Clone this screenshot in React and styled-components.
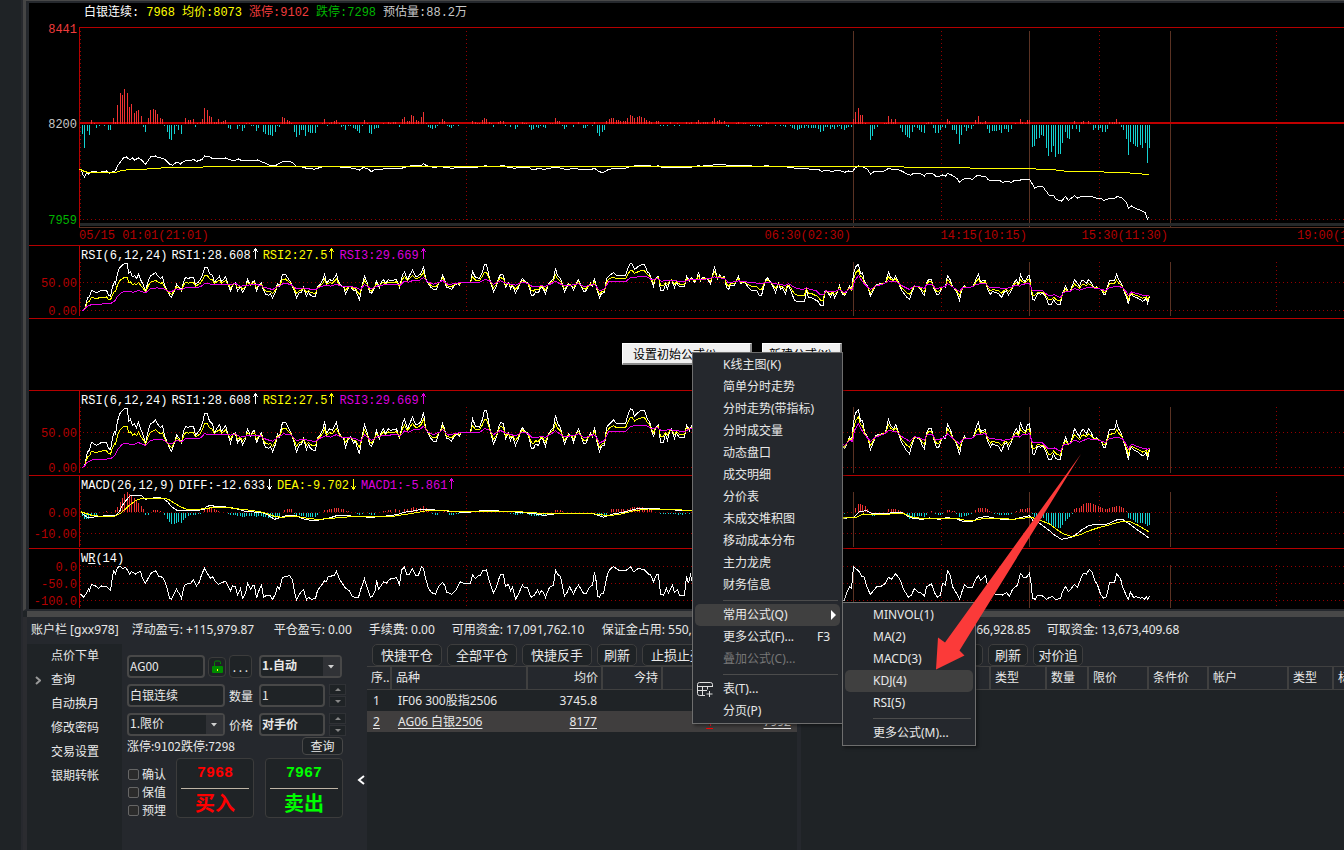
import React, { useState } from 'react';
import styled, { createGlobalStyle } from 'styled-components';

const UI_FONT = '"Noto Sans", "Noto Sans CJK SC", sans-serif';
const MONO_FONT = '"Liberation Mono", "Noto Sans CJK SC", monospace';
const FORM_FONT = '"Noto Sans CJK SC", sans-serif';

const GlobalStyle = createGlobalStyle`
    * {
        box-sizing: border-box;
    }
    body {
        margin: 0;
        background: #1f2326;
        color: #e8e8e8;
        font-family: ${UI_FONT};
        font-size: 12px;
        line-height: 16px;
    }
    button, input, select {
        margin: 0;
        color: inherit;
        font: inherit;
    }
`

const Page = styled.div`
    position: relative;
    display: flex;
    min-height: 100vh;
    overflow: hidden;
`
const Rail = styled.aside`
    flex: 0 0 23px;
    border-right: 2px solid #27292e;
`
const Main = styled.main`
    flex: 1;
    min-width: 0;
    display: flex;
    flex-direction: column;
`

/* ---------- charts ---------- */

const Charts = styled.section`
    border-left: 3px solid #454545;
    border-top: 1px solid #484848;
    border-bottom: 2px solid #25282d;
    padding: 2px 0 0 3px;
    background: #25282d;
`
const Splitter = styled.div`
    height: 6px;
    margin-left: 4px;
    background: #484848;
`
const Panel = styled.div`
    position: relative;
    background: #000;
    border-bottom: ${({ $last }) => $last ? 'none' : '1px solid #b40000'};
`
const Plot = styled.svg`
    display: block;
    width: 100%;
    font-family: ${MONO_FONT};
    font-size: 12px;
    shape-rendering: crispEdges;
`
const Legend = styled.div`
    position: absolute;
    top: 2px;
    left: ${({ $left }) => $left || 52}px;
    display: flex;
    gap: ${({ $gap }) => $gap || 4}px;
    font-family: ${MONO_FONT};
    white-space: nowrap;
`
const LegendItem = styled.span`
    display: flex;
    align-items: center;
    gap: 1px;
    color: ${({ $color }) => $color};
`
const EmptyPanel = styled(Panel)`
    display: flex;
    gap: 10px;
    height: 72px;
    padding: 24px 0 0 593px;
`
const FormulaButton = styled.button`
    height: 22px;
    width: ${({ $width }) => $width}px;
    padding: 0 0 0 ${({ $pad }) => $pad}px;
    border: 1px solid #fff;
    border-right: 2px solid #8a8a8a;
    border-bottom: 2px solid #8a8a8a;
    background: #f0f0f0;
    color: #000;
    font-family: ${FORM_FONT};
    text-align: left;
    white-space: nowrap;
`

// samples are kept in thirds of a pixel, in blocks of 448px
const BLOCK = 448;
const parse = (blocks, dy = 0) => blocks.flatMap((block, i) =>
    block.split(' ').map(pair => {
        const [x, y] = pair.split(',').map(Number);
        return [Math.floor(x / 3) + BLOCK * i + 0.5, y / 3 + dy];
    })
);
const parseBars = blocks => blocks.flatMap((block, i) =>
    block.split(' ').map(pair => {
        const [x, h] = pair.split(',').map(Number);
        return [Math.floor(x / 3) + BLOCK * i, Math.round(h / 3)];
    })
);
const valueAt = (points, x) => {
    const i = points.findIndex(p => p[0] >= x);
    if (i < 0) return points[points.length - 1][1];
    if (i === 0) return points[0][1];
    const [x0, y0] = points[i - 1];
    const [x1, y1] = points[i];
    return x1 === x0 ? y1 : y0 + (y1 - y0) * (x - x0) / (x1 - x0);
};

const priceLine = parse([
    '238,507 244,510 248,522 254,531 260,518 266,522 275,514 290,516 305,516 318,513 328,519 340,515 347,512 353,498 360,485 370,474 380,471 388,479 396,474 404,480 416,474 424,480 436,493 445,480 452,471 466,468 475,473 490,475 500,483 508,492 516,496 524,490 532,487 540,492 548,487 556,482 570,482 580,478 590,484 600,480 608,477 614,468 625,469 635,474 650,477 665,476 675,474 690,480 705,481 715,477 727,483 740,482 760,481 772,480 785,485 800,491 812,497 826,497 840,488 850,484 870,485 880,490 890,500 905,500 917,504 930,504 940,508 955,504 970,500 985,500 1000,499 1015,499 1030,504 1045,503 1060,505 1078,510 1090,502 1105,508 1115,515 1125,508 1140,510 1150,506 1170,506 1200,506 1215,501 1235,497 1260,498 1270,491 1280,497 1300,502 1325,500 1340,503',
    '0,503 10,505 30,502 80,502 100,500 112,497 125,500 150,499 165,496 175,501 200,505 210,502 240,502 252,509 270,506 290,508 310,504 325,502 340,505 352,508 380,506 410,509 430,508 440,505 450,514 460,517 470,516 480,508 500,506 530,506 545,500 565,497 605,497 615,500 630,497 640,501 700,501 730,501 750,497 760,499 770,497 788,498 798,493 830,494 845,498 860,496 900,497 930,500 955,497 970,499 1010,500 1030,503 1050,506 1080,507 1110,508 1120,514 1135,511 1150,514 1175,511 1188,517 1200,513 1212,514 1222,503 1232,498 1245,501 1258,508 1268,522 1280,514 1305,514 1322,505 1335,509 1342,507',
    '0,507 15,513 30,521 42,526 52,520 70,520 85,528 92,520 108,520 118,528 130,529 140,525 148,529 155,520 165,525 175,530 183,537 190,547 200,538 215,535 228,538 240,528 250,526 258,531 268,529 278,540 310,541 318,547 330,544 345,547 355,541 370,541 380,538 400,538 405,548 415,564 425,560 440,559 452,575 460,587 472,587 482,599 495,603 508,590 518,601 535,587 545,594 555,589 585,589 600,595 615,595 622,602 640,595 655,595 663,589 678,595 690,608 697,625 705,618 718,625 735,632 748,638 750,650 755,658 758,652',
]);
const averageLine = parse([
    '238,507 250,513 262,517 345,517 365,512 390,508 440,508 445,505 480,505 485,502 608,502 612,499 1340,499',
    '0,499 1340,499',
    '0,499 22,499 24,502 220,502 223,505 418,505 420,508 475,508 480,511 502,511 505,514 622,514 626,517 700,517 703,520 735,520 738,523 758,523',
]);
const priceBars = parseBars([
    '248,-27 254,-68 263,-18 269,-30 275,12 283,3 290,-9 297,-3 312,-2 326,-15 332,-15 341,18 347,6 353,57 361,93 367,87 374,105 382,93 388,51 395,60 403,33 409,39 416,42 424,24 430,-6 437,-21 445,18 451,42 460,45 466,42 473,30 482,18 488,15 494,-2 502,-21 508,-42 515,-45 523,-27 529,-3 535,-15 544,-27 556,18 565,12 571,12 580,15 586,-6 592,3 601,6 607,15 613,48 622,42 628,24 634,21 643,6 649,6 655,15 664,6 670,9 676,12 685,-9 691,-12 712,-12 718,-3 727,-18 733,-9 740,3 748,3 754,-3 760,-3 769,-18 775,-9 790,-21 797,-27 804,-30 811,-30 817,-33 826,-21 832,-3 838,-6 847,21 853,18 862,12 868,9 874,3 883,-21 889,-36 898,-30 904,-15 910,-15 916,-33 925,-21 931,-24 937,-24 946,-24 952,-6 967,3 973,15 982,-3 988,3 995,6 1003,9 1009,12 1017,3 1024,-6 1030,-3 1036,-15 1044,-3 1051,-3 1059,-9 1065,-12 1072,-18 1078,-24 1086,-3 1093,12 1101,3 1108,-24 1114,-27 1122,-12 1129,-9 1135,-9 1150,3 1165,6 1171,3 1179,6 1186,6 1198,-6 1207,15 1213,21 1221,9 1228,9 1234,27 1240,24 1249,12 1255,9 1264,21 1270,36 1278,3 1285,-6 1291,-9 1297,-12 1306,-9 1312,-3 1318,6 1327,15 1333,9 1341,-3',
    '4,-6 10,-9 17,-3 31,-3 73,9 82,6 88,3 94,3 103,12 109,18 115,15 123,6 130,3 136,-6 151,6 157,9 166,9 172,-3 187,-6 202,-12 208,-6 222,6 229,4 236,4 244,-6 250,-15 256,-12 265,-6 271,-9 277,-3 286,-6 292,-9 307,3 313,3 322,18 328,9 334,9 343,-3 349,-12 355,-6 376,-6 391,6 406,-9 412,-9 418,-3 433,-3 439,6 448,-24 454,-33 463,-21 469,-15 475,9 484,15 490,18 496,18 505,12 511,12 517,9 526,9 532,9 538,18 547,27 553,24 559,18 568,21 574,24 580,21 589,18 595,12 604,9 610,6 625,9 631,9 637,-3 646,-3 658,-3 667,6 679,-3 688,3 694,-3 715,6 724,4 730,6 745,6 751,12 757,3 766,6 772,6 778,6 793,9 799,18 808,9 814,12 820,6 829,9 835,-3 841,-6 865,3 871,6 886,3 892,3 907,-3 913,-3 919,-3 928,-3 934,-6 940,-3 955,6 961,3 982,-3 997,-3 1006,-3 1012,-6 1027,-3 1033,-9 1039,-12 1048,-15 1054,-12 1060,-9 1069,-9 1075,-3 1081,-9 1090,-9 1096,-9 1102,-9 1111,-12 1117,-21 1126,-18 1132,-6 1138,-6 1147,-12 1153,-6 1159,-12 1168,-6 1174,-3 1180,-12 1189,-15 1195,-9 1201,-6 1210,-6 1216,15 1222,36 1231,48 1237,27 1243,27 1252,3 1267,-45 1273,-33 1279,-12 1288,-6 1309,3 1315,3 1321,24 1330,15 1336,6 1342,15',
    '13,-9 19,-21 28,-30 34,-36 40,-39 49,-21 55,-6 64,-9 70,-15 76,-21 85,-24 91,3 97,6 106,6 112,-9 118,-24 127,-24 133,-15 139,-6 148,-9 154,15 160,9 169,-15 175,-15 181,-27 190,-57 196,-30 205,-6 211,-18 217,-9 226,-12 232,-3 238,12 247,24 253,6 259,3 268,9 274,-12 280,-24 289,-18 295,-18 301,-18 310,-15 316,-24 325,-12 331,-12 337,-21 346,-12 358,3 373,15 379,6 388,3 394,12 400,12 409,-66 415,-63 421,-42 430,-39 436,-30 442,-33 451,-69 457,-93 466,-81 472,-63 478,-96 487,-87 493,-87 499,-54 508,-21 514,-39 520,-42 529,-12 535,9 541,-12 550,-21 556,6 562,9 577,9 583,3 592,-15 598,-9 607,-15 613,-9 619,-21 628,-21 634,-12 640,6 649,6 655,6 661,15 670,6 676,-6 682,-15 691,-42 697,-90 703,-51 712,-57 718,-63 724,-66 733,-60 739,-69 748,-54 754,-114 760,-69',
]);
const rsi1 = parse([
    '248,931 252,928 258,905 263,893 268,890 275,870 283,875 290,878 300,872 320,870 326,885 332,888 338,860 342,845 347,850 352,820 357,803 365,797 374,790 382,790 386,820 390,815 396,830 402,826 408,835 416,822 422,838 430,855 437,872 445,840 451,826 458,824 465,817 473,826 480,835 487,830 494,855 502,872 508,885 515,892 522,872 530,852 537,862 545,872 550,845 557,832 565,835 572,832 580,832 587,853 595,845 602,838 609,815 614,802 622,802 628,820 636,826 644,848 650,838 657,828 664,845 677,830 684,855 691,872 699,850 706,848 713,872 720,860 728,877 735,862 742,838 750,855 756,845 762,842 769,872 776,858 783,848 790,870 797,882 805,885 811,880 817,893 825,875 832,850 838,858 847,822 855,822 862,832 872,845 880,865 890,893 898,876 905,876 911,862 918,888 926,876 932,885 940,890 947,890 953,860 962,852 970,835 974,820 980,850 988,838 997,842 1004,832 1010,822 1016,845 1024,858 1030,858 1037,882 1045,862 1052,858 1060,872 1066,868 1072,885 1078,898 1085,865 1094,828 1102,850 1108,875 1115,880 1122,862 1130,842 1137,862 1144,845 1150,838 1157,850 1165,838 1172,842 1188,838 1198,862 1206,825 1213,815 1221,838 1228,826 1236,810 1245,828 1252,828 1260,822 1266,808 1270,797 1275,835 1284,850 1290,860 1300,868 1308,868 1314,850 1320,845 1327,825 1333,838 1340,862',
    '0,862 10,868 20,855 28,850 33,856 38,848 66,848 73,814 82,832 95,834 103,815 109,793 115,793 120,820 128,845 137,874 145,858 152,835 158,823 165,825 172,862 180,848 187,866 194,856 203,878 210,862 217,845 223,835 230,843 238,848 244,865 250,886 256,886 262,875 270,878 277,862 284,862 292,880 300,850 310,840 316,835 322,805 328,825 336,835 342,855 348,874 355,862 362,850 370,855 377,870 385,848 391,838 398,852 406,874 413,874 420,858 427,848 434,858 440,835 447,875 454,893 460,880 468,877 475,835 485,826 497,817 505,825 533,826 540,800 547,790 553,792 560,808 570,798 580,793 590,793 597,815 605,820 611,840 616,858 622,835 630,828 637,870 646,870 652,852 658,866 664,845 670,838 678,862 686,848 694,860 710,858 716,828 724,842 731,832 738,846 745,838 751,815 758,842 764,832 778,835 786,852 793,825 799,802 808,835 814,824 820,832 828,828 835,862 841,868 848,855 858,855 865,840 871,829 878,850 886,846 893,850 900,862 910,870 925,870 935,886 940,886 946,862 952,840 958,832 965,842 972,855 982,877 990,850 997,868 1004,862 1012,882 1018,858 1025,862 1032,885 1040,900 1048,904 1068,904 1075,870 1082,892 1090,892 1100,898 1108,902 1118,915 1126,915 1130,875 1138,875 1147,890 1154,876 1160,892 1168,876 1175,855 1182,882 1188,885 1195,876 1203,858 1210,870 1216,822 1222,800 1231,792 1236,820 1244,818 1250,845 1258,858 1267,888 1275,870 1282,855 1290,852 1300,850 1312,848 1321,815 1328,830 1335,838 1342,828',
    '0,832 8,848 15,870 22,878 30,890 40,898 48,872 55,858 65,860 72,865 80,880 85,886 90,850 97,838 106,838 112,862 120,882 128,884 135,865 141,858 148,862 155,826 163,840 170,858 178,870 184,882 190,900 197,872 205,856 212,862 228,860 235,850 240,832 247,822 253,845 260,842 268,840 275,868 282,882 290,874 308,880 317,892 325,874 332,872 338,885 346,870 352,850 360,838 368,852 374,822 380,838 388,845 394,828 400,826 405,870 410,898 416,900 424,880 432,882 442,880 450,896 457,912 465,912 472,898 478,908 485,912 493,912 500,880 509,858 516,875 523,872 530,855 536,838 543,850 550,858 557,842 563,840 570,850 578,838 585,848 592,862 600,860 608,864 615,868 622,882 629,882 635,858 641,840 655,840 662,822 668,838 675,850 682,868 690,892 697,912 703,880 712,888 720,892 728,895 738,903 745,900 750,892 755,913 760,888',
]);
const rsi3 = parse([
    '246,931 252,928 260,920 275,913 330,910 340,905 347,900 353,888 365,877 374,873 400,876 416,871 437,878 450,866 470,863 490,865 502,872 515,874 530,866 545,869 557,862 587,862 602,860 614,850 635,852 660,852 690,853 705,850 720,858 740,855 760,853 780,855 790,861 817,868 835,858 850,850 870,852 890,866 910,863 930,867 947,868 960,860 975,855 990,858 1010,852 1025,858 1045,858 1065,862 1080,868 1094,853 1115,866 1130,858 1150,854 1190,852 1200,855 1213,843 1225,846 1240,840 1258,840 1270,832 1282,845 1300,852 1320,845 1327,840 1340,850',
    '0,853 30,848 70,847 95,847 110,838 120,840 137,852 158,842 172,848 203,855 223,846 240,850 252,860 280,857 292,858 310,850 322,843 335,850 350,857 375,854 391,850 410,860 435,852 442,855 454,872 468,866 480,845 533,845 547,832 570,830 595,830 610,838 628,835 640,843 665,840 690,843 710,845 725,838 751,838 780,836 799,830 830,835 842,848 871,842 900,846 940,850 958,846 990,852 1012,856 1020,850 1035,860 1048,866 1065,867 1075,862 1085,867 1105,872 1118,884 1126,884 1132,872 1155,875 1175,868 1188,878 1203,866 1212,868 1220,842 1231,826 1240,840 1250,852 1267,868 1282,858 1310,850 1321,842 1342,845',
    '0,845 15,856 40,868 55,857 70,860 85,865 92,853 108,852 118,865 135,862 148,858 155,850 170,860 190,874 200,863 228,860 240,852 268,850 280,862 310,863 320,866 345,862 355,855 370,858 380,852 400,850 408,872 440,872 457,886 475,884 493,892 502,876 520,874 536,865 550,870 575,862 600,864 629,871 640,862 665,858 678,862 690,876 697,886 705,875 735,884 755,887 760,884',
]);
const rsi2 = rsi1.map(([x, y]) => [x, (y + valueAt(rsi3, x)) / 2]);

const diffLine = parse([
    '245,578 255,588 265,593 290,590 318,587 345,587 358,575 368,555 378,540 390,526 425,526 436,538 460,534 475,532 490,536 503,545 515,560 530,570 545,573 570,571 600,570 612,568 620,560 632,556 650,560 670,560 695,563 715,568 740,575 780,577 800,582 812,590 822,598 840,592 862,586 885,586 905,595 925,600 945,603 965,598 985,595 1010,587 1050,588 1080,590 1115,592 1160,588 1195,583 1210,577 1235,574 1265,568 1290,568 1315,572 1340,572',
    '0,575 60,577 100,572 150,573 200,576 250,580 290,586 330,580 380,580 440,582 465,592 490,583 530,576 570,565 610,565 650,568 730,573 1185,595 1215,592 1235,575 1255,572 1270,580 1310,580 1342,578',
    '0,578 20,578 35,588 50,595 80,598 100,594 130,598 150,593 180,596 200,604 230,604 250,592 275,590 300,596 345,600 375,592 400,587 410,600 430,610 450,625 475,645 495,658 525,652 545,640 560,628 580,616 605,613 635,612 660,600 680,598 700,612 720,628 740,640 758,653',
], 320);
const deaLine = parse([
    '240,575 270,585 300,589 345,588 365,578 385,558 405,542 420,536 440,536 490,535 505,538 520,548 540,560 560,568 590,569 620,565 645,562 680,562 710,566 750,571 790,577 820,588 845,592 885,588 910,593 950,598 990,596 1020,592 1060,590 1120,590 1170,590 1210,584 1250,578 1280,572 1340,571',
    '0,573 60,576 120,575 200,574 250,578 310,582 400,580 440,582 480,587 520,582 560,572 600,567 660,567 730,572 1185,594 1225,592 1245,582 1270,583 1310,584 1342,580',
    '0,580 25,582 50,592 100,597 180,595 215,602 240,600 270,594 300,594 350,598 405,592 430,600 460,612 480,628 500,640 525,650 550,645 580,632 610,622 650,612 680,604 700,604 725,615 758,635',
], 320);
const macdBars = parseBars([
    '248,-9 254,-18 260,-18 266,-18 275,-9 283,-6 290,-6 318,3 347,6 353,15 361,30 367,42 374,54 382,60 388,54 395,48 403,42 409,36 416,28 424,18 430,8 437,-6 445,-6 460,5 466,6 473,6 480,3 494,-6 502,-18 508,-27 515,-33 523,-33 529,-30 535,-27 544,-30 550,-21 556,-15 565,-9 571,-6 580,-6 586,-6 595,-4 600,-4 613,9 622,12 628,12 634,12 643,9 649,6 655,4 685,-4 691,-6 700,-6 706,-6 712,-9 720,-9 727,-12 733,-12 740,-9 748,-9 754,-9 762,-9 769,-12 776,-9 783,-9 790,-12 797,-12 804,-15 811,-15 817,-18 826,-15 832,-12 838,-9 853,6 862,9 868,9 874,8 883,-3 889,-6 897,-6 904,-9 911,-9 918,-12 925,-12 931,-12 938,-12 946,-12 953,-6 973,6 982,6 988,8 995,9 1003,12 1009,12 1016,12 1024,9 1030,8 1038,3 1045,3 1072,-4 1078,-6 1086,-4 1108,-4 1114,-6 1122,-6 1150,3 1157,3 1165,6 1172,6 1186,9 1198,6 1213,9 1221,9 1234,12 1240,15 1249,12 1262,12 1270,18 1278,12 1284,9 1297,-4 1306,-6 1312,-6 1333,3',
    '4,-6 10,-6 17,-6 25,-4 31,-3 88,3 103,6 109,6 115,6 123,5 130,3 187,-3 195,-4 202,-6 209,-6 217,-4 224,-4 244,-6 250,-9 258,-9 265,-9 272,-9 280,-9 286,-6 292,-9 300,-4 322,6 328,6 336,6 343,3 400,-3 412,-4 448,-6 454,-9 461,-9 468,-9 475,-6 490,8 497,9 505,9 512,8 520,8 526,8 538,9 547,12 553,15 560,15 568,15 574,15 582,15 590,12 597,9 604,9 611,6 637,-3 646,-4 652,-4 660,-4 668,-4 676,-4 682,-4 690,-6 697,-4 704,-6 711,-4 724,-3 1189,-3 1222,12 1231,24 1237,24 1243,21 1252,18 1258,9 1273,-8 1280,-8 1288,-6 1295,-4 1321,8 1330,8 1336,8 1342,10',
    '6,6 12,4 25,-6 33,-12 40,-18 49,-15 55,-12 64,-9 70,-9 76,-9 84,-12 91,-6 106,4 118,-4 127,-6 133,-6 139,-4 154,5 160,7 168,4 175,4 182,-4 190,-12 196,-12 205,-9 211,-9 217,-6 226,-4 238,6 247,12 253,12 260,12 268,12 274,9 280,4 295,-3 303,-4 310,-5 316,-6 325,-6 331,-6 338,-5 346,-4 360,4 373,9 380,9 388,9 394,11 400,12 409,-3 415,-12 421,-15 430,-15 436,-15 442,-15 451,-24 457,-33 466,-39 472,-39 478,-42 487,-45 493,-45 499,-36 508,-24 514,-18 520,-12 529,-4 535,9 541,11 550,12 556,18 562,24 570,26 577,28 583,28 592,24 598,21 607,18 613,15 619,11 628,9 634,9 640,11 649,15 655,15 661,18 670,18 676,15 682,12 691,4 697,-15 703,-18 712,-21 718,-27 724,-30 733,-30 739,-30 748,-33 754,-38 760,-36',
]);
const wrLine = parse([
    '240,822 250,832 258,820 264,808 268,813 275,793 285,798 295,805 305,798 320,800 330,811 334,790 340,752 347,762 353,742 362,739 368,746 375,742 383,750 388,762 395,755 405,762 412,758 420,754 428,775 437,790 445,773 455,758 465,752 475,768 488,772 495,790 503,810 508,835 515,838 522,820 530,808 538,822 544,835 550,805 557,793 570,790 580,780 588,798 597,785 605,765 614,745 622,762 630,774 637,770 645,785 655,793 665,788 675,784 685,800 692,812 698,798 706,800 713,825 720,806 728,835 735,820 742,790 750,808 756,798 762,796 769,835 776,815 783,795 790,832 800,826 810,828 818,838 825,822 832,800 838,808 847,772 860,770 868,766 876,780 883,815 890,840 898,822 905,815 911,808 918,840 926,832 935,838 945,836 953,812 962,800 972,782 978,785 985,768 995,768 1003,765 1010,754 1018,778 1025,786 1035,805 1048,812 1058,830 1065,832 1075,832 1082,810 1094,777 1102,805 1112,832 1118,828 1125,810 1130,780 1136,808 1144,795 1150,786 1158,790 1168,778 1175,776 1190,773 1198,795 1205,750 1213,740 1220,762 1228,762 1237,746 1247,765 1255,765 1265,740 1270,745 1275,775 1284,805 1293,818 1305,822 1315,800 1327,787 1335,800 1340,818',
    '0,818 10,823 22,812 30,795 38,785 50,792 66,790 73,764 82,776 90,766 98,766 103,752 115,750 120,775 128,795 137,818 145,800 152,780 158,763 166,765 172,800 180,793 187,812 192,800 203,838 212,822 223,795 230,803 238,802 244,822 250,832 260,825 268,810 275,822 280,812 287,818 292,832 300,808 308,800 316,795 322,750 328,762 336,770 343,800 350,828 358,815 365,800 376,822 383,808 391,795 398,805 406,820 415,820 425,802 433,795 440,755 444,790 448,828 454,832 460,820 467,820 474,775 480,755 488,746 497,740 510,750 535,750 548,740 555,755 562,752 570,745 582,748 590,750 600,762 608,765 616,785 625,764 632,765 636,822 646,826 655,805 662,820 672,795 680,818 688,808 694,828 708,826 716,768 722,790 726,765 731,775 735,800 1185,842 1190,840 1196,820 1203,800 1210,805 1216,740 1224,748 1232,752 1240,768 1248,772 1256,798 1268,824 1278,808 1288,798 1300,798 1312,790 1321,772 1330,778 1342,762',
    '0,765 8,772 15,790 22,808 30,822 38,832 46,825 55,805 65,815 75,820 85,828 92,800 105,792 115,818 125,832 132,825 140,790 148,795 155,752 163,768 170,800 180,820 190,838 198,810 205,795 215,802 228,802 238,778 247,768 254,780 268,768 275,795 285,808 295,822 320,825 330,818 340,828 350,808 365,795 374,760 382,772 392,772 400,760 405,800 410,835 418,838 425,826 440,828 450,838 460,832 470,830 478,838 493,836 500,815 509,800 518,815 526,805 536,793 545,802 555,770 563,760 570,762 580,748 588,758 595,780 603,795 612,822 622,835 630,830 640,788 655,788 662,762 672,775 680,800 690,828 697,838 704,815 712,832 722,830 732,835 738,832 745,838 750,830 755,838 760,828',
], 320);

const LEFT = 29;
const FAR = 4000;
const dottedX = [466, 941, 1099, 1276];
const solidX = [853, 1029, 1170];

const Line = ({ points, color }) => (
    <polyline points={points.map(p => p.join(',')).join(' ')} fill="none" stroke={color} strokeWidth="1" />
)

const Bars = ({ bars, up, down }) => bars.map(([x, h]) => (
    <rect key={x} x={x} y={h > 0 ? up - h : down} width="1" height={Math.abs(h)} fill={h > 0 ? '#f03232' : '#14d2d2'} />
))

// everything inside is drawn in window coordinates
const ChartPlot = ({ top, height, gridTop, gridBottom, levels, axisBottom, children }) => (
    <Plot height={height}>
        <g transform={`translate(${-LEFT} ${-top})`}>
            {levels.map(y => (
                <line key={y} x1="83" x2={FAR} y1={y + 0.5} y2={y + 0.5} stroke="#960000" strokeDasharray="1 3" />
            ))}
            {dottedX.map(x => (
                <line key={x} x1={x + 0.5} x2={x + 0.5} y1={gridTop} y2={gridBottom} stroke="#960000" strokeDasharray="1 3" />
            ))}
            {solidX.map(x => (
                <line key={x} x1={x + 0.5} x2={x + 0.5} y1={Math.max(gridTop, 28)} y2={axisBottom} stroke="#5a3223" />
            ))}
            <line x1="79.5" x2="79.5" y1={top} y2={axisBottom} stroke="#b40000" />
            <line x1="80.5" x2="80.5" y1={gridTop} y2={gridBottom} stroke="#960000" strokeDasharray="1 3" />
            {children}
        </g>
    </Plot>
)

const AxisLabel = ({ y, color = '#b40000', children }) => (
    <text x="77" y={y} fill={color} textAnchor="end">{children}</text>
)

const Arrow = ({ down }) => (
    <svg width="7" height="16" viewBox="0 0 7 16" shapeRendering="crispEdges" aria-hidden="true">
        <g fill="currentColor" transform={down ? 'translate(0 12) scale(1 -1)' : undefined}>
            <rect x="3" y="0" width="1" height="11" />
            <rect x="2" y="1" width="3" height="2" />
            <rect x="1" y="3" width="1" height="1" />
            <rect x="5" y="3" width="1" height="1" />
        </g>
    </svg>
)

const RsiPanel = ({ top, height, zero, step }) => {
    const scale = points => points.map(([x, y]) => [x, zero + 0.5 + (y - 310.3) * step / 28]);
    return (
        <Panel>
            <ChartPlot top={top} height={height} gridTop={top + 16} gridBottom={top + height - 4}
                axisBottom={top + height - 2} levels={[zero - step, zero]}>
                <AxisLabel y={zero - step + 5}>50.00</AxisLabel>
                <AxisLabel y={zero + 5}>0.00</AxisLabel>
                <Line points={scale(rsi1)} color="#fff" />
                <Line points={scale(rsi2)} color="#ff0" />
                <Line points={scale(rsi3)} color="#e600e6" />
            </ChartPlot>
            <Legend>
                <LegendItem $color="#fff">RSI(6,12,24)</LegendItem>
                <LegendItem $color="#fff">RSI1:28.608<Arrow /></LegendItem>
                <LegendItem $color="#ff0">RSI2:27.5<Arrow /></LegendItem>
                <LegendItem $color="#dc00dc">RSI3:29.669<Arrow /></LegendItem>
            </Legend>
        </Panel>
    )
}

/* ---------- account area ---------- */

const Account = styled.section`
    flex: 1;
    display: flex;
    flex-direction: column;
    border-left: 4px solid #2b2c30;
    background: #25282d;
`
const StatusBar = styled.div`
    display: flex;
    gap: 16px;
    height: 27px;
    padding: 5px 4px;
    white-space: nowrap;
    overflow: hidden;
`
const StatusItem = styled.span`
    flex: none;
    min-width: ${({ $min }) => $min || 0}px;
    margin-right: ${({ $tight }) => $tight ? '-3px' : 0};
    text-align: ${({ $right }) => $right ? 'right' : 'left'};
`
const Body = styled.div`
    flex: 1;
    display: flex;
    min-height: 206px;
`
const SideNav = styled.nav`
    flex: 0 0 95px;
    background: #1f2326;
`
const NavLink = styled.a`
    display: flex;
    align-items: center;
    height: 24px;
    color: inherit;
    text-decoration: none;
    svg {
        flex: none;
        margin: 0 10px 0 8px;
    }
`
const OrderForm = styled.form`
    flex: 0 0 auto;
    padding: 11px 0 0 5px;
    font-family: ${FORM_FONT};
`
const FormGrid = styled.div`
    display: grid;
    grid-template-columns: 98px 26px 66px 17px;
    gap: 6px 4px;
    align-items: center;
`
const CodeCell = styled.div`
    grid-column: span 2;
    display: flex;
    align-items: center;
    gap: 3px;
`
const Field = styled.input`
    width: ${({ $width }) => $width ? `${$width}px` : '100%'};
    height: 23px;
    padding: 0 0 3px 1px;
    border: 2px solid #484848;
    border-radius: 4px;
    background: #1f2326;
    outline: none;
    font-weight: ${({ $bold }) => $bold ? 700 : 400};
`
const SelectBox = styled.div`
    position: relative;
    grid-column: span ${({ $span }) => $span || 1};
    width: ${({ $width }) => $width ? `${$width}px` : 'auto'};
    svg {
        position: absolute;
        right: 2px;
        top: 2px;
        pointer-events: none;
    }
`
const Select = styled(Field).attrs({ as: 'select' })`
    appearance: none;
`
const IconButton = styled.button`
    display: flex;
    align-items: center;
    justify-content: center;
    width: ${({ $width }) => $width}px;
    height: ${({ $height }) => $height}px;
    padding: 0;
    border: 1px solid #3c3c3c;
    border-radius: 4px;
    background: #1f2326;
`
const Spinner = styled.div`
    display: grid;
    gap: 1px;
`
const SpinButton = styled.button`
    display: flex;
    align-items: center;
    justify-content: center;
    height: 11px;
    padding: 0;
    border: 1px solid #303236;
    background: #1f2326;
    color: #888;
`
const LimitRow = styled.div`
    display: flex;
    justify-content: space-between;
    align-items: center;
    width: 216px;
    margin-top: 1px;
`
const QueryButton = styled.button`
    width: 41px;
    height: 18px;
    padding: 0;
    border: 1px solid #484848;
    border-radius: 4px;
    background: #1f2326;
    line-height: 14px;
`
const TradeRow = styled.div`
    display: flex;
    gap: 11px;
    margin-top: 3px;
`
const Checks = styled.div`
    width: 38px;
    padding-top: 7px;
`
const CheckLabel = styled.label`
    display: flex;
    align-items: center;
    gap: 3px;
    height: 18px;
    white-space: nowrap;
    margin-left: 1px;
`
const CheckBox = styled.input`
    appearance: none;
    flex: none;
    width: 11px;
    height: 11px;
    border: 1px solid #666;
    border-radius: 2px;
    background: #2b2b2b;
`
const TradeButton = styled.button`
    width: 78px;
    height: 60px;
    padding: 0 4px;
    border: 1px solid #3c3c3c;
    border-radius: 4px;
    background: #1f2326;
    color: ${({ $color }) => $color};
    font-weight: 700;
    text-align: center;
`
const TradePrice = styled.span`
    display: block;
    border-bottom: 1px solid #beb4a5;
    font-family: ${MONO_FONT};
    font-size: 15px;
    line-height: 28px;
`
const TradeSide = styled.span`
    display: block;
    font-size: 20px;
    line-height: 28px;
`
const Collapse = styled.button`
    flex: 0 0 21px;
    padding: 68px 0 0 10px;
    border: 0;
    background: none;
    text-align: left;
`
const Pane = styled.div`
    flex: ${({ $width }) => $width ? `0 0 ${$width}px` : '1 1 0'};
    min-width: 0;
    display: flex;
    flex-direction: column;
    overflow: hidden;
    border-right: ${({ $width }) => $width ? '4px solid #25282d' : 'none'};
    background: #1f2326;
`
const Toolbar = styled.div`
    display: flex;
    gap: 5px;
    height: 22px;
    padding-left: ${({ $left }) => $left}px;
    background: #25282d;
`
const ToolButton = styled.button`
    flex: none;
    width: ${({ $width }) => $width || 70}px;
    height: 22px;
    padding: 0;
    border: 1px solid #3e3e3e;
    border-radius: 5px;
    background: #1f2326;
    font-size: 13px;
    line-height: 20px;
`
const Table = styled.table`
    width: 100%;
    min-width: ${({ $min }) => $min || 0}px;
    table-layout: fixed;
    border-collapse: separate;
    border-spacing: 0;
    white-space: nowrap;
`
const Th = styled.th`
    height: 24px;
    padding: 0 3px 0 4px;
    border-top: 1px solid #404040;
    border-bottom: 1px solid #404040;
    border-right: 2px solid #404040;
    background: #25282d;
    overflow: hidden;
    font-weight: 400;
    text-align: ${({ $right }) => $right ? 'right' : 'left'};
    &:last-child {
        border-right: 0;
    }
`
const Row = styled.tr`
    background: ${({ $selected }) => $selected ? '#403e3e' : 'transparent'};
    td {
        text-decoration: ${({ $selected }) => $selected ? 'underline' : 'none'};
        text-underline-offset: 2px;
    }
`
const Td = styled.td`
    height: 21px;
    padding: 0 6px;
    color: ${({ $color }) => $color || 'inherit'};
    text-align: ${({ $right }) => $right ? 'right' : 'left'};
`

/* ---------- popup menus ---------- */

const Menu = styled.div`
    position: absolute;
    left: ${({ $left }) => $left}px;
    top: ${({ $top }) => $top}px;
    width: ${({ $width }) => $width}px;
    padding: 1px 2px;
    border: 1px solid #6e6e6e;
    background: #25282d;
    box-shadow: 2px 2px 3px rgba(0, 0, 0, 0.4);
`
const MenuItem = styled.button`
    display: flex;
    align-items: center;
    width: 100%;
    height: 22px;
    padding: 0 3px 0 0;
    border: 0;
    border-radius: 5px;
    background: ${({ $active }) => $active ? '#404040' : 'transparent'};
    color: ${({ disabled }) => disabled ? '#777' : '#e8e8e8'};
    white-space: nowrap;
`
const MenuIcon = styled.span`
    display: flex;
    flex: 0 0 28px;
    padding-left: 2px;
`
const MenuHint = styled.span`
    margin-left: auto;
    padding-right: ${({ $inset }) => $inset || 0}px;
`
const Separator = styled.hr`
    margin: 4px 2px 3px 28px;
    border: 0;
    border-top: 1px solid #4c4c4c;
`
const Pointer = styled.svg`
    position: absolute;
    left: 930px;
    top: 450px;
    pointer-events: none;
`

const formulaMenu = [
    { label: 'K线主图(K)' },
    { label: '简单分时走势' },
    { label: '分时走势(带指标)' },
    { label: '分时成交量' },
    { label: '动态盘口' },
    { label: '成交明细' },
    { label: '分价表' },
    { label: '未成交堆积图' },
    { label: '移动成本分布' },
    { label: '主力龙虎' },
    { label: '财务信息' },
    null,
    { label: '常用公式(Q)', active: true, submenu: true },
    { label: '更多公式(F)...', hint: 'F3' },
    { label: '叠加公式(C)...', disabled: true },
    null,
    { label: '表(T)...', icon: true },
    { label: '分页(P)' },
];
const commonMenu = [
    { label: 'MINVOL(1)' },
    { label: 'MA(2)' },
    { label: 'MACD(3)' },
    { label: 'KDJ(4)', active: true },
    { label: 'RSI(5)' },
    null,
    { label: '更多公式(M)...' },
];
const navItems = ['点价下单', '查询', '自动换月', '修改密码', '交易设置', '银期转帐'];
const holdings = [
    { no: 1, name: 'IF06 300股指2506', price: '3745.8' },
    { no: 2, name: 'AG06 白银2506', price: '8177', count: '1', last: '7992', selected: true },
];
const conditionColumns = [
    ['', 190], ['类型', 56], ['数量', 42], ['限价', 60], ['条件价', 60], ['帐户', 80], ['类型', 45], ['标的', 60],
];

const TableIcon = () => (
    <svg width="16" height="16" viewBox="0 0 16 16" fill="none" stroke="#e0e0e0" aria-hidden="true">
        <path d="M15.5 6V3.5a2 2 0 0 0-2-2H2.5a2 2 0 0 0-2 2v9a2 2 0 0 0 2 2H8M.5 5.5h15M.5 9.5H10M5.5 5.5v9M10.5 5.5v3" />
        <path d="M12.5 10v6M9.5 13h6" />
    </svg>
)

const DropArrow = () => (
    <svg width="17" height="19" viewBox="0 0 17 19" aria-hidden="true">
        <rect width="17" height="19" fill="#303236" />
        <path d="M5 8h6l-3 3.5z" fill="#d0d0d0" />
    </svg>
)

const Spin = ({ name }) => (
    <Spinner>
        <SpinButton type="button" aria-label={`${name}+`}>
            <svg width="6" height="3"><path d="M3 0l3 3H0z" fill="currentColor" /></svg>
        </SpinButton>
        <SpinButton type="button" aria-label={`${name}-`}>
            <svg width="6" height="3"><path d="M0 0h6L3 3z" fill="currentColor" /></svg>
        </SpinButton>
    </Spinner>
)

const SubmenuArrow = styled.svg`
    display: block;
`

const PopupMenu = ({ items, ...rest }) => (
    <Menu role="menu" {...rest}>
        {items.map((item, i) => item ? (
            <MenuItem key={item.label} type="button" role="menuitem" $active={item.active} disabled={item.disabled}>
                <MenuIcon>{item.icon && <TableIcon />}</MenuIcon>
                {item.label}
                {item.hint && <MenuHint $inset={7}>{item.hint}</MenuHint>}
                {item.submenu && (
                    <MenuHint>
                        <SubmenuArrow width="6" height="10"><path d="M0 0l5 5-5 5z" fill="#fff" /></SubmenuArrow>
                    </MenuHint>
                )}
            </MenuItem>
        ) : <Separator key={i} />)}
    </Menu>
)

const ChartArea = () => (
    <Charts>
        <Panel>
            <ChartPlot top={3} height={242} gridTop={31} gridBottom={220} axisBottom={227} levels={[219]}>
                <rect x="79" y="3" width="2" height="24" fill="#000" />
                <rect x="79" y="27" width={FAR} height="1" fill="#b40000" />
                <rect x="79" y="122" width={FAR} height="2" fill="#c00000" />
                <rect x="80" y="223" width={FAR} height="3" fill="#252829" />
                <rect x="79" y="227" width={FAR} height="1" fill="#5a3223" />
                <Bars bars={priceBars} up={124} down={125} />
                <Line points={priceLine} color="#fff" />
                <Line points={averageLine} color="#ff0" />
                <AxisLabel y={33} color="#f03c3c">8441</AxisLabel>
                <AxisLabel y={128} color="#c8c8c8">8200</AxisLabel>
                <AxisLabel y={224} color="#00b400">7959</AxisLabel>
                <g fill="#b40000">
                    <text x="79" y="239">05/15 01:01(21:01)</text>
                    <text x="851" y="239" textAnchor="end">06:30(02:30)</text>
                    <text x="1027" y="239" textAnchor="end">14:15(10:15)</text>
                    <text x="1168" y="239" textAnchor="end">15:30(11:30)</text>
                    <text x="1297" y="239">19:00(15:00)</text>
                </g>
            </ChartPlot>
            <Legend $left={55} $gap={7}>
                <LegendItem $color="#fff">白银连续:</LegendItem>
                <LegendItem $color="#ff0">7968</LegendItem>
                <LegendItem $color="#ff0">均价:8073</LegendItem>
                <LegendItem $color="#f03c3c">涨停:9102</LegendItem>
                <LegendItem $color="#00b400">跌停:7298</LegendItem>
                <LegendItem $color="#c8c8c8">预估量:88.2万</LegendItem>
            </Legend>
        </Panel>
        <RsiPanel top={246} height={72} zero={310} step={28} />
        <EmptyPanel>
            <FormulaButton type="button" $width={130} $pad={10}>设置初始公式(I)...</FormulaButton>
            <FormulaButton type="button" $width={80} $pad={6}>新建公式(X)</FormulaButton>
        </EmptyPanel>
        <RsiPanel top={391} height={84} zero={467} step={35} />
        <Panel>
            <ChartPlot top={476} height={72} gridTop={492} gridBottom={545} axisBottom={547} levels={[512, 533]}>
                <AxisLabel y={517}>0.00</AxisLabel>
                <AxisLabel y={538}>-10.00</AxisLabel>
                <Bars bars={macdBars} up={512} down={513} />
                <Line points={diffLine} color="#fff" />
                <Line points={deaLine} color="#ff0" />
            </ChartPlot>
            <Legend>
                <LegendItem $color="#fff">MACD(26,12,9)</LegendItem>
                <LegendItem $color="#fff">DIFF:-12.633<Arrow down /></LegendItem>
                <LegendItem $color="#ff0">DEA:-9.702<Arrow down /></LegendItem>
                <LegendItem $color="#dc00dc">MACD1:-5.861<Arrow /></LegendItem>
            </Legend>
        </Panel>
        <Panel $last>
            <ChartPlot top={549} height={60} gridTop={565} gridBottom={606} axisBottom={608} levels={[566, 583, 600]}>
                <AxisLabel y={571}>0.0</AxisLabel>
                <AxisLabel y={588}>-50.0</AxisLabel>
                <AxisLabel y={605}>-100.0</AxisLabel>
                <Line points={wrLine} color="#fff" />
            </ChartPlot>
            <Legend>
                <LegendItem $color="#fff"><span>W<u>R</u>(14)</span></LegendItem>
            </Legend>
        </Panel>
    </Charts>
)

const OrderPanel = () => {
    const [code, setCode] = useState('AG00');
    const [count, setCount] = useState('1');
    const [price, setPrice] = useState('对手价');

    return (
        <OrderForm>
            <FormGrid>
                <CodeCell>
                    <Field $width={78} aria-label="代码" value={code} onChange={e => setCode(e.target.value)} />
                    <IconButton type="button" $width={18} $height={20} aria-label="锁定">
                        <svg width="12" height="14" viewBox="0 0 12 14">
                            <path d="M3.5 7V2.5A1.5 1.5 0 0 1 5 1h3a1.5 1.5 0 0 1 1.5 1.5V4" fill="none" stroke="#008c00" />
                            <rect x="1" y="6" width="11" height="7" rx="1" fill="#008c00" />
                            <rect x="6" y="9" width="1" height="2" fill="#ff0" />
                        </svg>
                    </IconButton>
                    <IconButton type="button" $width={23} $height={23}>. . .</IconButton>
                </CodeCell>
                <SelectBox $span={2} $width={83}>
                    <Select $bold aria-label="开平"><option>1.自动</option></Select>
                    <DropArrow />
                </SelectBox>

                <Field aria-label="名称" defaultValue="白银连续" />
                <label htmlFor="count">数量</label>
                <Field id="count" value={count} onChange={e => setCount(e.target.value)} />
                <Spin name="数量" />

                <SelectBox>
                    <Select aria-label="报单类型"><option>1.限价</option></Select>
                    <DropArrow />
                </SelectBox>
                <label htmlFor="price">价格</label>
                <Field id="price" $bold value={price} onChange={e => setPrice(e.target.value)} />
                <Spin name="价格" />
            </FormGrid>
            <LimitRow>
                <span>涨停:9102跌停:7298</span>
                <QueryButton type="button">查询</QueryButton>
            </LimitRow>
            <TradeRow>
                <Checks>
                    {['确认', '保值', '预埋'].map(label => (
                        <CheckLabel key={label}><CheckBox type="checkbox" />{label}</CheckLabel>
                    ))}
                </Checks>
                <TradeButton type="button" $color="#ff0000">
                    <TradePrice>7968</TradePrice>
                    <TradeSide>买入</TradeSide>
                </TradeButton>
                <TradeButton type="button" $color="#00ff00">
                    <TradePrice>7967</TradePrice>
                    <TradeSide>卖出</TradeSide>
                </TradeButton>
            </TradeRow>
        </OrderForm>
    )
}

const App = () => (
    <Page>
        <GlobalStyle />
        <Rail />
        <Main>
            <ChartArea />
            <Splitter />
            <Account>
                <StatusBar>
                    <StatusItem $tight>账户栏 [gxx978]</StatusItem>
                    <StatusItem $min={126}>浮动盈亏: +115,979.87</StatusItem>
                    <StatusItem $min={79}>平仓盈亏: 0.00</StatusItem>
                    <StatusItem $min={67}>手续费: 0.00</StatusItem>
                    <StatusItem $min={134}>可用资金: 17,091,762.10</StatusItem>
                    <StatusItem $min={200}>保证金占用: 550,166.75</StatusItem>
                    <StatusItem $min={213} $right>总资金: 17,766,928.85</StatusItem>
                    <StatusItem>可取资金: 13,673,409.68</StatusItem>
                </StatusBar>
                <Body>
                    <SideNav>
                        {navItems.map((label, i) => (
                            <NavLink key={label} href="#">
                                <svg width="6" height="9" fill="none" stroke="#999" strokeWidth="2">
                                    {i === 1 && <path d="M1 1l4 3.5-4 3.5" />}
                                </svg>
                                {label}
                            </NavLink>
                        ))}
                    </SideNav>
                    <OrderPanel />
                    <Collapse type="button" aria-label="收起">
                        <svg width="10" height="10" fill="none" stroke="#fff" strokeWidth="2"><path d="M8 1L3 5l5 4" /></svg>
                    </Collapse>
                    <Pane $width={434}>
                        <Toolbar $left={5}>
                            <ToolButton type="button">快捷平仓</ToolButton>
                            <ToolButton type="button">全部平仓</ToolButton>
                            <ToolButton type="button">快捷反手</ToolButton>
                            <ToolButton type="button" $width={40}>刷新</ToolButton>
                            <ToolButton type="button">止损止盈</ToolButton>
                        </Toolbar>
                        <Table>
                            <colgroup>
                                <col style={{ width: 25 }} />
                                <col style={{ width: 136 }} />
                                <col style={{ width: 75 }} />
                                <col style={{ width: 60 }} />
                                <col style={{ width: 56 }} />
                                <col />
                            </colgroup>
                            <thead>
                                <tr>
                                    <Th>序..</Th>
                                    <Th>品种</Th>
                                    <Th $right>均价</Th>
                                    <Th $right>今持</Th>
                                    <Th />
                                    <Th />
                                </tr>
                            </thead>
                            <tbody>
                                {holdings.map(item => (
                                    <Row key={item.no} $selected={item.selected}>
                                        <Td>{item.no}</Td>
                                        <Td>{item.name}</Td>
                                        <Td $right>{item.price}</Td>
                                        <Td />
                                        <Td $right $color="#f00">{item.count}</Td>
                                        <Td $right>{item.last}</Td>
                                    </Row>
                                ))}
                            </tbody>
                        </Table>
                    </Pane>
                    <Pane>
                        <Toolbar $left={112}>
                            <ToolButton type="button" aria-label="撤单" />
                            <ToolButton type="button" $width={40}>刷新</ToolButton>
                            <ToolButton type="button" $width={50}>对价追</ToolButton>
                        </Toolbar>
                        <Table $min={593}>
                            <colgroup>
                                {conditionColumns.map(([, width], i) => <col key={i} style={{ width }} />)}
                            </colgroup>
                            <thead>
                                <tr>
                                    {conditionColumns.map(([label], i) => <Th key={i}>{label}</Th>)}
                                </tr>
                            </thead>
                        </Table>
                    </Pane>
                </Body>
            </Account>
        </Main>
        <PopupMenu items={formulaMenu} $left={692} $top={352} $width={151} />
        <PopupMenu items={commonMenu} $left={842} $top={602} $width={134} />
        <Pointer width="156" height="224" viewBox="930 450 156 224" aria-hidden="true">
            <path d="M1081 454L945 642.5 938 637.5 936 669.5 964.5 655.5 959.5 650.5z" fill="#fb3a39" />
        </Pointer>
    </Page>
)

export default App;
